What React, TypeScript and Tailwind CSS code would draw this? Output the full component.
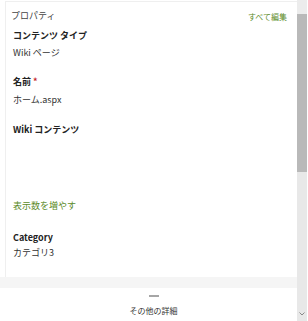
import React from "react";

const font = "font-['Noto_Sans_CJK_JP','Noto_Sans',sans-serif]";

export default function App() {
  return (
    <div className={`w-[308px] h-[321px] bg-white flex overflow-hidden ${font}`}>
      <div className="w-[297px] h-full flex flex-col">
        <div className="flex-1 ml-[5px] mt-[1px] border-l border-t border-[#efefef] flex flex-col">
          <div className="h-[27px] flex justify-between items-center pl-[5px] pr-[10px]">
            <span className="text-[9px] leading-[12px] text-[#444] mt-[1px]">プロパティ</span>
            <span className="text-[8px] leading-[12px] text-[#5b8a1f] mt-[3px]">すべて編集</span>
          </div>
          <div className="pl-[7px]">
            <div className="text-[9px] leading-[14px] font-bold text-[#222]">コンテンツ タイプ</div>
            <div className="mt-[3px] text-[9px] leading-[14px] text-[#333]">Wiki ページ</div>
            <div className="mt-[15px] text-[9px] leading-[14px] font-bold text-[#222]">
              名前 <span className="text-[#c4262e]">*</span>
            </div>
            <div className="mt-[4px] text-[9px] leading-[14px] text-[#333]">ホーム.aspx</div>
            <div className="mt-[16px] text-[9px] leading-[14px] font-bold text-[#222]">Wiki コンテンツ</div>
            <div className="mt-[62px] text-[9px] leading-[14px] text-[#5b8a1f]">表示数を増やす</div>
            <div className="mt-[18px] text-[9px] leading-[14px] font-bold text-[#222]">Category</div>
            <div className="mt-[1px] text-[9px] leading-[14px] text-[#333]">カテゴリ3</div>
          </div>
        </div>
        <div className="h-[11px] bg-[#f5f5f5] shrink-0" />
        <div className="h-[33px] shrink-0 flex flex-col items-center pl-[10px]">
          <div className="mt-[7px] w-[10px] h-[2px] bg-[#a6a6a6]" />
          <div className="mt-[8px] text-[8px] leading-[12px] text-[#333]">その他の詳細</div>
        </div>
      </div>
      <div className="w-[10px] h-full flex flex-col bg-[#e8e8e8]">
        <div className="h-[14px] bg-[#ececec]" />
        <div className="h-[158px] bg-[#b9b9b9]" />
        <div className="flex-1" />
        <div className="h-[14px] flex items-center justify-center">
          <svg width="6" height="4" viewBox="0 0 6 4">
            <path d="M0.5 0.5 L3 3 L5.5 0.5" fill="none" stroke="#888" strokeWidth="1" />
          </svg>
        </div>
      </div>
      <div className="w-[1px] h-full bg-white" />
    </div>
  );
}
